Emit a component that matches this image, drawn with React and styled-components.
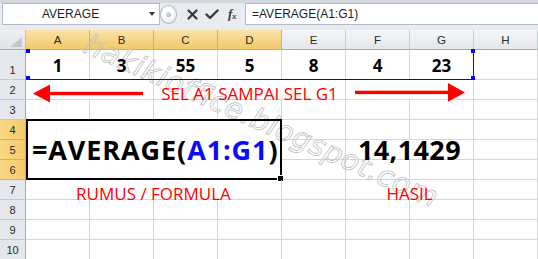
import React from 'react';
import styled, { createGlobalStyle } from 'styled-components';

const GlobalStyle = createGlobalStyle`
  html, body { margin: 0; padding: 0; background: #fff; }
  body { overflow: hidden; }
`;

const Screen = styled.div`
  position: relative;
  width: 538px;
  height: 259px;
  overflow: hidden;
  display: flex;
  flex-direction: column;
  background: #fff;
  font-family: "Liberation Sans", Arial, sans-serif;
`;

/* ---------- formula bar ---------- */
const FormulaBar = styled.div`
  flex: 0 0 30px;
  box-sizing: border-box;
  display: flex;
  align-items: flex-start;
  padding: 3px 0 0 2px;
  background: linear-gradient(#d3d8de 0, #d3d8de 3px, #e8ebef 3px, #e8ebef 100%);
`;

const NameBox = styled.div`
  box-sizing: border-box;
  width: 158px;
  height: 22px;
  background: #fff;
  border: 1px solid #b5bcc5;
  display: flex;
  align-items: center;
  padding-left: 39px;
  font-size: 12px;
  color: #1e1e1e;
`;

const DropArrow = styled.span`
  margin-left: auto;
  margin-right: 4px;
  width: 0;
  height: 0;
  border-left: 3.5px solid transparent;
  border-right: 3.5px solid transparent;
  border-top: 4px solid #3a3a3a;
`;

const FxArea = styled.div`
  width: 85px;
  height: 22px;
  display: flex;
  align-items: center;
`;

const Knob = styled.div`
  box-sizing: border-box;
  width: 17px;
  height: 19px;
  border-radius: 50%;
  border: 1px solid #b3bac3;
  background: radial-gradient(circle at 45% 40%, #ffffff 30%, #dfe3e8 100%);
  display: flex;
  align-items: center;
  justify-content: center;
  margin-right: 5px;
`;

const KnobDot = styled.span`
  width: 5px;
  height: 5px;
  border-radius: 50%;
  background: radial-gradient(circle at 40% 35%, #e3e6ea, #9aa2ab);
`;

const IconButton = styled.div`
  width: 20px;
  height: 22px;
  display: flex;
  align-items: center;
  justify-content: center;
  color: #333;
`;

const FxLabel = styled.span`
  font-family: "Liberation Serif", "DejaVu Serif", serif;
  font-style: italic;
  font-weight: bold;
  font-size: 13px;
  color: #3a3a3a;
  letter-spacing: -0.5px;
  & sub {
    font-size: 9px;
    vertical-align: baseline;
    position: relative;
    top: 1px;
  }
`;

const FormulaInput = styled.div`
  flex: 1;
  box-sizing: border-box;
  height: 22px;
  background: #fff;
  border: 1px solid #b5bcc5;
  border-right: none;
  display: flex;
  align-items: center;
  padding-left: 6px;
  font-size: 12px;
  color: #1e1e1e;
`;

/* ---------- sheet grid ---------- */
const Sheet = styled.div`
  position: relative;
  display: grid;
  grid-template-columns: 26px repeat(8, 64px);
  grid-template-rows: 20px 30px repeat(9, 20px);
`;

const Corner = styled.div`
  grid-row: 1;
  grid-column: 1;
  box-sizing: border-box;
  background: linear-gradient(#eef0f3, #e0e3e7);
  border-right: 1px solid #b9c1cb;
  border-bottom: 1px solid #9eabb9;
  display: flex;
  align-items: flex-end;
  justify-content: flex-end;
  padding: 0 3px 2px 0;
`;

const ColHead = styled.div`
  grid-row: 1;
  grid-column: ${(p) => p.$col};
  box-sizing: border-box;
  display: flex;
  align-items: center;
  justify-content: center;
  font-size: 11.5px;
  color: #2b2b2b;
  background: ${(p) =>
    p.$on ? 'linear-gradient(#fae3a7, #f4c96a)' : 'linear-gradient(#f6f7f9, #e3e6ea)'};
  border-right: 1px solid ${(p) => (p.$on ? '#dcb05c' : '#c7cdd4')};
  border-bottom: 1px solid ${(p) => (p.$on ? '#e8a94b' : '#9eabb9')};
`;

const RowHead = styled.div`
  grid-row: ${(p) => p.$row};
  grid-column: 1;
  box-sizing: border-box;
  display: flex;
  align-items: flex-end;
  justify-content: center;
  padding-bottom: 3px;
  font-size: 11px;
  line-height: 11px;
  color: #2b2b2b;
  background: ${(p) => (p.$on ? 'linear-gradient(90deg, #f9d985, #f5cc6c)' : '#e4e7eb')};
  border-right: 1px solid ${(p) => (p.$on ? '#e8a94b' : '#9eabb9')};
  border-bottom: 1px solid ${(p) => (p.$on ? '#dcb05c' : '#c5cbd2')};
`;

const Cell = styled.div`
  grid-row: ${(p) => p.$row} / span ${(p) => p.$rows || 1};
  grid-column: ${(p) => p.$col} / span ${(p) => p.$span || 1};
  box-sizing: border-box;
  position: relative;
  min-width: 0;
  display: flex;
  border-right: 1px solid #d6d6d6;
  border-bottom: 1px solid #d6d6d6;
`;

const NumberCell = styled(Cell)`
  align-items: flex-end;
  justify-content: center;
  padding-bottom: 5px;
  font-family: "Open Sans", "Liberation Sans", sans-serif;
  font-weight: bold;
  font-size: 17px;
  line-height: 17px;
  color: #000;
  z-index: 2;
`;

const LabelCell = styled(Cell)`
  align-items: flex-end;
  justify-content: center;
  overflow: visible;
  z-index: 2;
`;

const RedLabel = styled.span`
  font-family: "Open Sans", "Liberation Sans", sans-serif;
  font-size: 17px;
  line-height: 17px;
  margin-bottom: -3px;
  color: #ff0000;
  white-space: nowrap;
`;

const ArrowCell = styled(Cell)`
  align-items: flex-start;
  overflow: visible;
  z-index: 2;
`;

const ArrowSvg = styled.svg`
  display: block;
  overflow: visible;
`;

const FormulaCell = styled(Cell)`
  align-items: center;
  padding-left: 6px;
  border-color: transparent;
  z-index: 2;
  &::after {
    content: '';
    position: absolute;
    top: -1px;
    left: 0;
    right: -1px;
    bottom: -1px;
    border: 2px solid #000;
    pointer-events: none;
  }
`;

const FillHandle = styled.span`
  position: absolute;
  right: -3px;
  bottom: -3px;
  width: 5px;
  height: 5px;
  background: #000;
  border: 1px solid #fff;
  z-index: 2;
`;

const BigText = styled.span`
  font-family: "Open Sans", "Liberation Sans", sans-serif;
  font-weight: bold;
  font-size: ${(p) => p.$size || 26}px;
  line-height: ${(p) => p.$size || 26}px;
  letter-spacing: ${(p) => p.$spacing || 0}px;
  color: #000;
  white-space: nowrap;
`;

const Ref = styled.span`
  color: #0a0aff;
`;

const ResultCell = styled(Cell)`
  align-items: center;
  justify-content: center;
  overflow: visible;
  z-index: 2;
`;

const Selection = styled.div`
  grid-row: 2;
  grid-column: 2 / span 7;
  position: relative;
  box-sizing: border-box;
  border-right: 1px solid #0000ff;
  border-bottom: 1px solid #0000ff;
  pointer-events: none;
  z-index: 3;
`;

const Handle = styled.span`
  position: absolute;
  width: 4px;
  height: 4px;
  background: #0000ff;
  ${(p) => (p.$top ? 'top: -1px;' : 'bottom: -1px;')}
  ${(p) => (p.$left ? 'left: 0;' : 'right: -2px;')}
`;

const Watermark = styled.span`
  position: absolute;
  left: 93px;
  top: 27px;
  transform: rotate(24deg);
  transform-origin: 0 0;
  font-family: "DejaVu Sans", sans-serif;
  font-style: oblique;
  font-size: 29px;
  letter-spacing: 0.5px;
  color: transparent;
  -webkit-text-stroke: 0.8px #c2c2c2;
  white-space: nowrap;
  pointer-events: none;
  z-index: 1;
`;

const COLS = ['A', 'B', 'C', 'D', 'E', 'F', 'G', 'H'];
const NUMBERS = [1, 3, 55, 5, 8, 4, 23];

function LeftArrow() {
  return (
    <ArrowSvg width="128" height="20" viewBox="0 0 128 20">
      <rect x="22" y="11.8" width="95" height="3.4" fill="#ff0000" />
      <polygon points="7,13.5 24,4.5 24,22.5" fill="#ff0000" />
    </ArrowSvg>
  );
}

function RightArrow() {
  return (
    <ArrowSvg width="128" height="20" viewBox="0 0 128 20">
      <rect x="9" y="10.7" width="95" height="3.4" fill="#ff0000" />
      <polygon points="119,12.4 102,3 102,21.8" fill="#ff0000" />
    </ArrowSvg>
  );
}

export default function App() {
  const covered = new Set();
  const cover = (r, c, rows = 1, span = 1) => {
    for (let i = r; i < r + rows; i++) for (let j = c; j < c + span; j++) covered.add(`${i}-${j}`);
  };

  const special = [];
  NUMBERS.forEach((n, i) => {
    cover(1, i);
    special.push(
      <NumberCell key={`n${i}`} $row={2} $col={i + 2}>
        {n}
      </NumberCell>
    );
  });
  cover(2, 0, 1, 2);
  special.push(
    <ArrowCell key="la" $row={3} $col={2} $span={2}>
      <LeftArrow />
    </ArrowCell>
  );
  cover(2, 2, 1, 3);
  special.push(
    <LabelCell key="sel" $row={3} $col={4} $span={3}>
      <RedLabel>SEL A1 SAMPAI SEL G1</RedLabel>
    </LabelCell>
  );
  cover(2, 5, 1, 2);
  special.push(
    <ArrowCell key="ra" $row={3} $col={7} $span={2}>
      <RightArrow />
    </ArrowCell>
  );
  cover(4, 0, 3, 4);
  special.push(
    <FormulaCell key="f" $row={5} $col={2} $rows={3} $span={4}>
      <BigText $size={27} $spacing={0.9}>
        =AVERAGE(<Ref>A1:G1</Ref>)
      </BigText>
      <FillHandle />
    </FormulaCell>
  );
  cover(5, 5, 1, 2);
  special.push(
    <ResultCell key="res" $row={6} $col={7} $span={2}>
      <BigText $size={27} $spacing={0.4}>14,1429</BigText>
    </ResultCell>
  );
  cover(7, 0, 1, 4);
  special.push(
    <LabelCell key="rumus" $row={8} $col={2} $span={4}>
      <RedLabel>RUMUS / FORMULA</RedLabel>
    </LabelCell>
  );
  cover(7, 5, 1, 2);
  special.push(
    <LabelCell key="hasil" $row={8} $col={7} $span={2}>
      <RedLabel>HASIL</RedLabel>
    </LabelCell>
  );

  const empties = [];
  for (let r = 1; r <= 10; r++) {
    for (let c = 0; c < 8; c++) {
      if (!covered.has(`${r}-${c}`)) {
        empties.push(<Cell key={`e${r}-${c}`} $row={r + 1} $col={c + 2} />);
      }
    }
  }

  return (
    <Screen>
      <GlobalStyle />
      <FormulaBar>
        <NameBox>
          AVERAGE
          <DropArrow />
        </NameBox>
        <FxArea>
          <Knob>
            <KnobDot />
          </Knob>
          <IconButton>
            <svg width="11" height="11" viewBox="0 0 11 11">
              <path d="M1.5 1.5 L9.5 9.5 M9.5 1.5 L1.5 9.5" stroke="#3a3a3a" strokeWidth="2.2" strokeLinecap="round" />
            </svg>
          </IconButton>
          <IconButton>
            <svg width="14" height="11" viewBox="0 0 14 11">
              <path d="M1.5 5.5 L5 9 L12.5 1.5" stroke="#3a3a3a" strokeWidth="2.4" fill="none" strokeLinecap="round" strokeLinejoin="round" />
            </svg>
          </IconButton>
          <IconButton>
            <FxLabel>
              f<sub>x</sub>
            </FxLabel>
          </IconButton>
        </FxArea>
        <FormulaInput>=AVERAGE(A1:G1)</FormulaInput>
      </FormulaBar>

      <Sheet>
        <Corner>
          <svg width="12" height="10" viewBox="0 0 12 10">
            <polygon points="0,10 12,10 12,0" fill="#c4c9d0" />
          </svg>
        </Corner>
        {COLS.map((c, i) => (
          <ColHead key={c} $col={i + 2} $on={i < 4}>
            {c}
          </ColHead>
        ))}
        {Array.from({ length: 10 }, (_, i) => (
          <RowHead key={i} $row={i + 2} $on={i >= 3 && i <= 5}>
            {i + 1}
          </RowHead>
        ))}
        {empties}
        {special}
        <Selection>
          <Handle $top $left />
          <Handle $top />
          <Handle $left />
          <Handle />
        </Selection>
      </Sheet>

      <Watermark>hakikioffice.blogspot.com</Watermark>
    </Screen>
  );
}
